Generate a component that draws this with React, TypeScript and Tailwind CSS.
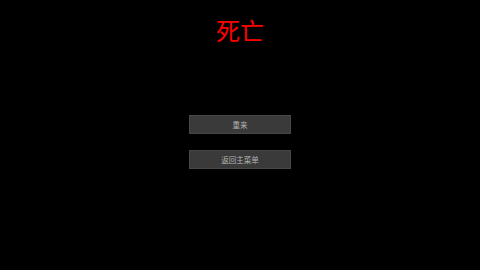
import React from "react";

export default function App() {
  return (
    <div
      className="w-[480px] h-[270px] bg-black flex flex-col items-center"
      style={{ fontFamily: '"Noto Sans CJK SC", "Noto Sans", sans-serif' }}
    >
      <div className="mt-[15px] h-[30px] text-[24px] leading-[30px] text-[#ff0000]">死亡</div>
      <div className="mt-[70px] flex flex-col gap-[16px]">
        <button className="w-[102px] h-[19px] bg-[#3a3a3a] border border-[#474747] text-[7.5px] leading-none text-[#b4b4b4] flex items-center justify-center">
          重来
        </button>
        <button className="w-[102px] h-[19px] bg-[#3a3a3a] border border-[#474747] text-[7.5px] leading-none text-[#b4b4b4] flex items-center justify-center">
          返回主菜单
        </button>
      </div>
    </div>
  );
}
